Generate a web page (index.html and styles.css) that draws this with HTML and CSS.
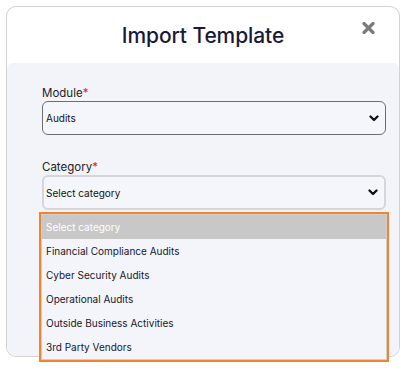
FILE: index.html
```html
<!DOCTYPE html>
<html lang="en">
<head>
<meta charset="utf-8">
<title>Import Template</title>
<link rel="stylesheet" href="styles.css">
</head>
<body>
<div class="modal">
  <div class="modal-header">
    <h1 class="modal-title">Import Template</h1>
    <button class="close" aria-label="Close">
      <svg width="13" height="12" viewBox="0 0 13 12"><path d="M2 1.5 L11 10.5 M11 1.5 L2 10.5" stroke="#7b7b7b" stroke-width="3.2" stroke-linecap="round"/></svg>
    </button>
  </div>
  <div class="modal-body">
    <div class="field">
      <label class="label">Module<span class="req">*</span></label>
      <div class="select">
        <span class="select-text">Audits</span>
        <svg class="chev" width="10" height="7" viewBox="0 0 10 7"><path d="M1.5 1.5 L5 5 L8.5 1.5" fill="none" stroke="#111" stroke-width="2.3" stroke-linecap="round" stroke-linejoin="round"/></svg>
      </div>
    </div>
    <div class="field field-gap">
      <label class="label">Category<span class="req">*</span></label>
      <div class="select select-open">
        <span class="select-text">Select category</span>
        <svg class="chev" width="10" height="7" viewBox="0 0 10 7"><path d="M1.5 1.5 L5 5 L8.5 1.5" fill="none" stroke="#111" stroke-width="2.3" stroke-linecap="round" stroke-linejoin="round"/></svg>
        <div class="dropdown">
          <ul class="options">
            <li class="option active">Select category</li>
            <li class="option">Financial Compliance Audits</li>
            <li class="option">Cyber Security Audits</li>
            <li class="option">Operational Audits</li>
            <li class="option">Outside Business Activities</li>
            <li class="option">3rd Party Vendors</li>
          </ul>
        </div>
      </div>
    </div>
  </div>
</div>
</body>
</html>
```

FILE: styles.css
```css
* { box-sizing: border-box; }
html, body { margin: 0; padding: 0; background: #ffffff; }
body {
  font-family: Inter, "Noto Sans", "Liberation Sans", sans-serif;
  color: #1f1f2e;
  min-height: 370px;
  padding-top: 6px;
}

.modal {
  margin: 0 0 0 6px;
  width: 394px;
  height: 351px;
  border: 1px solid #d2d2d2;
  border-radius: 10px;
  background: #ffffff;
  display: flex;
  flex-direction: column;
}

.modal-header {
  position: relative;
  height: 56px;
  display: flex;
  align-items: center;
  justify-content: center;
}
.modal-title {
  margin: 0;
  font-size: 21px;
  font-weight: 500;
  color: #1a1a38;
  letter-spacing: -0.1px;
}
.close {
  position: absolute;
  right: 24px;
  top: 15px;
  border: 0;
  background: none;
  padding: 0;
  width: 13px;
  height: 12px;
  display: flex;
}

.modal-body {
  flex: 1;
  background: #f3f4f9;
  border-radius: 6px 6px 9px 9px;
  padding: 23px 13px 0 35px;
}

.field { display: flex; flex-direction: column; }
.field-gap { margin-top: 25px; }

.label {
  font-size: 11.5px;
  line-height: 14px;
  color: #222;
  margin-bottom: 1px;
}
.req { color: #e0203a; }

.select {
  position: relative;
  height: 34px;
  border: 1px solid #6e6e6e;
  border-radius: 6px;
  background: #f5f6fb;
  display: flex;
  align-items: center;
  padding: 0 6px 0 3px;
}
.select-open {
  height: 35px;
  border: 2px solid #d6d6d9;
  padding-left: 2px;
}
.select-text {
  flex: 1;
  font-size: 10px;
  color: #111;
}

.dropdown {
  position: absolute;
  top: calc(100% + 4px);
  left: -5px;
  width: 350px;
  border: 2px solid #f5822f;
  background: #f4f5fb;
  z-index: 2;
}
.options {
  list-style: none;
  margin: 0;
  padding: 0;
  border: 1px solid #cfcfcf;
}
.option {
  height: 24px;
  line-height: 24px;
  padding-left: 4px;
  font-size: 10px;
  color: #16162a;
}
.option.active {
  background: #c8c8c8;
  color: #ffffff;
}
```
